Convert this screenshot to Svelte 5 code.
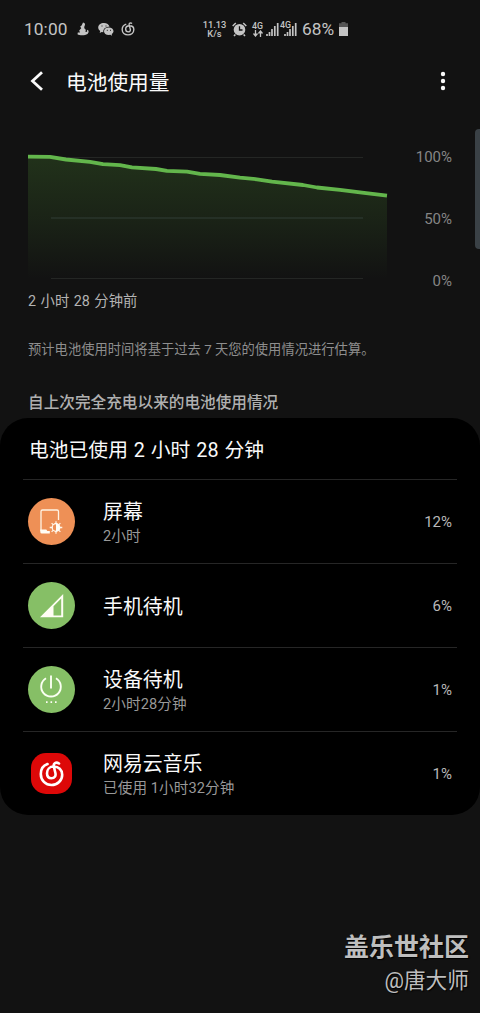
<script>
    const apps = [
        { icon: "screen", name: "屏幕", detail: "2小时", percent: 12 },
        { icon: "signal", name: "手机待机", detail: "", percent: 6 },
        { icon: "power", name: "设备待机", detail: "2小时28分钟", percent: 1 },
        { icon: "music", name: "网易云音乐", detail: "已使用 1小时32分钟", percent: 1 },
    ];

    const levels = [
        [0, 6.6], [22, 6.9], [38, 9.5], [62, 11.8], [75, 14.2], [92, 15.2],
        [104, 17.3], [128, 19], [139, 20.8], [159, 21.7], [172, 23.8],
        [192, 25], [212, 27.7], [229, 29.3], [244, 31.7], [275, 35],
        [289, 37.5], [312, 39.8], [334, 42.7], [359, 45.6],
    ];
    const line = levels.map((p) => p.join(",")).join(" ");
    const area = `0,129 ${line} 359,129`;
</script>

<div class="page">
    <div class="status">
        <span class="clock">10:00</span>
        <svg class="figure" width="12" height="14" viewBox="0 0 12 14">
            <path
                d="M6 0.5C8 .7 8.7 2.5 7.4 4.2L7.2 6.2C9 7.2 9 8.8 8.4 10L10 9.8C10.6 9.3 9.5 8.3 10.5 7.8 12 8.3 12 10.7 10.5 12 8 13.7 2.5 13.7.5 12.2L.8 10.4 3 10.6 2.2 8.4 4.2 6.2 3.2 4.4 4.6 3.6Z"
            />
        </svg>
        <svg class="wechat" width="16" height="14" viewBox="0 0 16 14">
            <path
                d="M6 1C2.6 1 .2 3 .2 5.6c0 1.5.8 2.7 2 3.5L1.7 11l2-1 1.6.3C5 7 7.4 4.7 11.5 4.8 11 2.6 8.8 1 6 1Z"
            />
            <path
                d="M10.8 5.6c-2.8 0-4.8 1.6-4.8 3.7s2 3.7 4.8 3.7l1.5-.2 1.8 1-.4-1.7c1.1-.7 1.8-1.7 1.8-2.8 0-2.1-2-3.700-4.700-3.700Z"
            />
            <path class="eyes" d="M3.500 4h1M7.500 4h1M8.800 8.300h1M12 8.300h1" />
        </svg>
        <svg class="tune" width="14" height="14" viewBox="0 0 24 24">
            <path
                d="M9 3.500C4.500 5 2 8.500 2 13 2 18.500 6.200 22 12 22s10-3.600 10-9C22 8.500 18.500 6.500 14.500 6.500 10.500 6.500 8 9 8 12.200s1.700 4.800 4.200 4.800 4.300-1.800 3.800-4.300L14 5c-.5-2.500 2-4.500 5-2.500"
            />
        </svg>
        <span class="speed"><span>11.13</span><span>K/s</span></span>
        <svg class="alarm" width="15" height="15" viewBox="0 0 15 15">
            <circle cx="7.5" cy="7.7" r="5.8" />
            <path class="bells" d="M.7 4 3.8 1M14.3 4 11.2 1M3.4 12.4 2 14M11.6 12.4 13 14" />
            <path class="hands" d="M7.5 4.2V8h3" />
        </svg>
        <span class="data">
            <span>4G</span>
            <svg width="10" height="7" viewBox="0 0 10 7">
                <path d="M2.5 0v5M.5 3.5l2 2.5 2-2.5M7.5 7V1.5M5.5 3.5l2-2.5 2 2.5" />
            </svg>
        </span>
        <svg class="bars" width="13" height="13" viewBox="0 0 13 13">
            <path d="M1 13v-2M3.5 13v-4M6 13V6M8.8 13V3M11.7 13V0" />
        </svg>
        <span class="second-sim">
            <svg class="bars" width="13" height="13" viewBox="0 0 13 13">
                <path d="M1 13v-2M3.5 13v-4M6 13V6M8.8 13V3M11.7 13V0" />
            </svg>
            <span class="tag">4G</span>
        </span>
        <span class="charge">68%</span>
        <svg class="battery" width="9" height="14" viewBox="0 0 9 14">
            <path class="empty" d="M2.5 0h4v1.3H9V5H0V1.3h2.5Z" />
            <path d="M0 5h9v9H0Z" />
        </svg>
    </div>

    <header>
        <svg class="back" width="14" height="20" viewBox="0 0 14 20">
            <path d="M12 1.2 2.5 10 12 18.8" />
        </svg>
        <h1>电池使用量</h1>
        <svg class="more" width="6" height="20" viewBox="0 0 6 20">
            <circle cx="3" cy="3" r="2.2" />
            <circle cx="3" cy="10" r="2.2" />
            <circle cx="3" cy="17" r="2.2" />
        </svg>
    </header>

    <section class="chart">
        <svg width="362" height="130" viewBox="0 0 362 130">
            <defs>
                <linearGradient id="fade" x1="0" y1="0" x2="0" y2="1">
                    <stop offset="0" stop-color="#5fb03c" stop-opacity="0.2" />
                    <stop offset="0.5" stop-color="#5fb03c" stop-opacity="0.11" />
                    <stop offset="1" stop-color="#5fb03c" stop-opacity="0" />
                </linearGradient>
            </defs>
            <path class="grid" d="M23 7.5h312M23 128.5h312" />
            <polygon points={area} fill="url(#fade)" />
            <path class="grid middle" d="M23 68h312" />
            <polyline points={line} />
        </svg>
        <div class="scale">
            <span>100%</span>
            <span>50%</span>
            <span>0%</span>
        </div>
    </section>
    <p class="since">2 小时 28 分钟前</p>
    <p class="hint">预计电池使用时间将基于过去 7 天您的使用情况进行估算。</p>
    <h2>自上次完全充电以来的电池使用情况</h2>

    <section class="card">
        <div class="total">电池已使用 2 小时 28 分钟</div>
        {#each apps as app}
            <div class="row">
                <div class="icon {app.icon}">
                    {#if app.icon === "screen"}
                        <svg width="47" height="47" viewBox="0 0 47 47">
                            <path class="thin" d="M13 33V13.5Q13 12 14.5 12h14.5Q30.5 12 30.5 13.5V22" />
                            <path class="solid" d="M12.3 31.5h6l1 1.5h2.5v2.5h-8q-1.5 0-1.5-1.5Z" />
                            <path class="thin" d="M28 23.2v12.6M21.7 29.5h12.6M23.6 25.1l8.8 8.8M32.4 25.1l-8.8 8.8" />
                            <circle class="sun" cx="28" cy="29.5" r="3.8" />
                            <path class="solid" d="M28 25.7a3.8 3.8 0 0 1 0 7.6Z" />
                        </svg>
                    {:else if app.icon === "signal"}
                        <svg width="47" height="47" viewBox="0 0 47 47">
                            <path class="solid" d="M12 35.3 35.2 12v23.3ZM25.5 24.2v9.3h7.7V16.5Z" fill-rule="evenodd" />
                        </svg>
                    {:else if app.icon === "power"}
                        <svg width="47" height="47" viewBox="0 0 47 47">
                            <path class="stroke" d="M23 9.5v13M18 12.3a9.8 9.8 0 1 0 10 0" />
                            <path class="solid" d="M18 35.3h1.6v1.7H18ZM22.5 35.3h1.6v1.7h-1.6ZM27 35.3h1.600v1.700H27Z" />
                        </svg>
                    {:else}
                        <svg width="41" height="41" viewBox="0 0 41 41">
                            <path
                                class="note"
                                d="M16.500 11C12 12.500 9.800 16.500 9.800 21c0 6.300 4.700 11 10.700 11s10.700-4.500 10.700-10.300c0-5-3.700-8.200-8.400-8.200-4.300 0-6.800 3.200-6.800 6.700 0 3.200 1.900 5 4.500 5 3 0 4.600-2.200 3.900-5.200l-1.600-6.500c-.7-3.300 2.200-5 5.200-3"
                            />
                        </svg>
                    {/if}
                </div>
                <div class="info">
                    <span class="name">{app.name}</span>
                    {#if app.detail}
                        <span class="detail">{app.detail}</span>
                    {/if}
                </div>
                <span class="percent">{app.percent}%</span>
            </div>
        {/each}
    </section>

    <footer>
        <strong>盖乐世社区</strong>
        <span>@唐大师</span>
    </footer>
    <div class="edge-handle"></div>
</div>

<style>
    :global(body) {
        margin: 0;
        background: #121212;
    }

    .page {
        position: relative;
        display: flex;
        flex-direction: column;
        box-sizing: border-box;
        width: 480px;
        height: 1013px;
        overflow: hidden;
        background: #121212;
        color: #fafafa;
        font-family: Roboto, "Noto Sans CJK SC", sans-serif;
    }

    svg {
        display: block;
        flex: none;
    }

    .status {
        display: flex;
        align-items: center;
        height: 58px;
        padding-left: 24px;
        color: #c4c4c4;
        fill: #c4c4c4;
        white-space: nowrap;
    }

    .clock {
        width: 53px;
        font-size: 17.3px;
        letter-spacing: 0.1px;
    }

    .wechat {
        margin-left: 9px;
    }

    .eyes {
        stroke: #222;
    }

    .tune {
        margin-left: 7px;
        fill: none;
        stroke: #c4c4c4;
        stroke-width: 2.4;
    }

    .speed {
        display: flex;
        flex-direction: column;
        align-items: center;
        width: 25px;
        margin-left: 67px;
        font-size: 9.3px;
        line-height: 9px;
        font-weight: 500;
    }

    .alarm {
        margin-left: 5px;
    }

    .bells {
        stroke: #c4c4c4;
        stroke-width: 1.5;
    }

    .hands {
        fill: none;
        stroke: #121212;
        stroke-width: 1.3;
    }

    .data {
        display: flex;
        flex-direction: column;
        align-items: center;
        width: 11px;
        margin-left: 5px;
        font-size: 8.8px;
        line-height: 8px;
        font-weight: 500;
    }

    .data path {
        fill: none;
        stroke: #c4c4c4;
        stroke-width: 1.3;
    }

    .bars {
        stroke: #c4c4c4;
        stroke-width: 1.7;
    }

    .data + .bars {
        margin-left: 3px;
    }

    .second-sim {
        position: relative;
        margin-left: 5px;
    }

    .tag {
        position: absolute;
        left: -4px;
        top: -2px;
        font-size: 8.8px;
        line-height: 8px;
        font-weight: 500;
        text-shadow: 0 0 1px #121212;
    }

    .charge {
        width: 32px;
        margin-left: 5px;
        font-size: 17.3px;
    }

    .battery {
        margin-left: 5px;
    }

    .empty {
        fill: #555;
    }

    header {
        display: flex;
        align-items: center;
        height: 46px;
        padding: 0 34px 0 30px;
    }

    .back path {
        fill: none;
        stroke: #fafafa;
        stroke-width: 2.8;
    }

    h1 {
        flex: 1;
        margin: 0 0 0 22px;
        padding-top: 3px;
        font-size: 20.7px;
        line-height: 30px;
        font-weight: 400;
    }

    .more {
        fill: #fafafa;
    }

    .chart {
        display: flex;
        justify-content: space-between;
        height: 138px;
        margin-top: 46px;
        padding: 0 28px;
    }

    .grid {
        stroke: #242624;
        stroke-width: 1;
    }

    .middle {
        stroke: #253026;
        stroke-width: 2;
    }

    polyline {
        fill: none;
        stroke: #63b64c;
        stroke-width: 3.8;
        stroke-linejoin: round;
    }

    .scale {
        display: flex;
        flex-direction: column;
        justify-content: space-between;
        height: 139px;
        color: #858585;
        font-size: 15px;
        line-height: 15px;
        text-align: right;
    }

    .since {
        height: 20px;
        margin: 3px 28px 0;
        color: #b4b4b4;
        font-size: 14.3px;
        line-height: 20px;
        word-spacing: 1px;
    }

    .hint {
        margin: 29px 28px 0;
        color: #8e8e8e;
        font-size: 13.3px;
        line-height: 20px;
        white-space: nowrap;
    }

    h2 {
        height: 22px;
        margin: 32px 28px 4px;
        color: #b0b0b0;
        font-size: 15.65px;
        line-height: 22px;
        font-weight: 500;
    }

    .card {
        box-sizing: border-box;
        height: 397px;
        padding: 0 23px;
        border-radius: 28px;
        background: #000;
    }

    .total {
        box-sizing: border-box;
        height: 61px;
        padding: 2px 0 0 6px;
        font-size: 19.8px;
        line-height: 61px;
        word-spacing: 1px;
    }

    .row {
        display: flex;
        align-items: center;
        box-sizing: border-box;
        height: 84px;
        padding: 0 5px;
        border-top: 1px solid #262626;
    }

    .icon {
        display: flex;
        align-items: center;
        justify-content: center;
        flex: none;
        width: 47px;
        height: 47px;
        border-radius: 50%;
        background: #86bf66;
    }

    .icon.screen {
        background: #ee9056;
    }

    .icon.music {
        width: 41px;
        height: 41px;
        margin: 0 3px;
        border-radius: 15px;
        background: #dd0808;
    }

    .solid {
        fill: #fffdf5;
    }

    .thin {
        fill: none;
        stroke: #fff3e4;
        stroke-width: 1.3;
    }

    .sun {
        fill: #ee9056;
        stroke: #fffdf5;
        stroke-width: 1.2;
    }

    .stroke {
        fill: none;
        stroke: #fafff2;
        stroke-width: 1.9;
    }

    .note {
        fill: none;
        stroke: #fff;
        stroke-width: 2.6;
        stroke-linecap: round;
    }

    .info {
        display: flex;
        flex: 1;
        flex-direction: column;
        margin-left: 28px;
        padding-top: 4px;
    }

    .name {
        font-size: 19.9px;
        line-height: 25px;
    }

    .detail {
        color: #999;
        font-size: 14.6px;
        line-height: 22px;
        letter-spacing: 0.1px;
    }

    .percent {
        color: #b8b8b8;
        font-size: 15px;
    }

    footer {
        display: flex;
        flex-direction: column;
        align-items: flex-end;
        margin: auto 11px 17px 0;
        color: #bebebe;
        text-shadow: 1px 1px 1px #000;
    }

    footer strong {
        font-size: 25px;
        line-height: 36px;
    }

    footer span {
        font-size: 21.7px;
        line-height: 30px;
    }

    .edge-handle {
        position: absolute;
        top: 129px;
        right: 0;
        width: 5px;
        height: 120px;
        border-radius: 4px 0 0 4px;
        background: #3a4146;
    }
</style>
